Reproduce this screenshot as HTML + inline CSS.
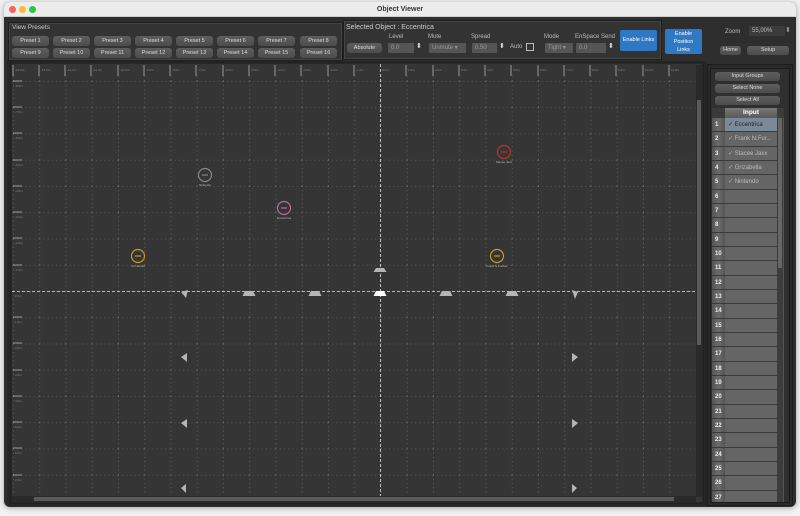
<!DOCTYPE html>
<html><head><meta charset="utf-8"><style>
*{box-sizing:border-box;margin:0;padding:0}
body{width:800px;height:516px;background:#f2f2f2;font-family:"Liberation Sans",sans-serif;position:relative;overflow:hidden}
.win{position:absolute;left:4px;top:2px;width:792px;height:505px;background:#2e2e2e;border-radius:6px;overflow:hidden;box-shadow:0 1px 6px rgba(0,0,0,.35)}
.tb{position:absolute;left:0;top:0;width:792px;height:15px;background:#ececec;border-bottom:1px solid #cfcfcf;text-align:center;font-size:7px;font-weight:bold;line-height:15px;color:#333}
.dot{position:absolute;top:4px;width:7px;height:7px;border-radius:50%}
.a{position:absolute}
.pnl{position:absolute;background:#333;border:1px solid #1e1e1e;box-shadow:inset 0 0 0 1px #444}
.btn{position:absolute;height:10px;background:linear-gradient(#5e5e5e,#4c4c4c);border-radius:3px;color:#ddd;font-size:5.5px;text-align:center;line-height:10px}
.lbl{position:absolute;font-size:6px;color:#bbb}
.fld{position:absolute;height:10px;background:#555;color:#999;font-size:6px;line-height:10px;padding-left:3px;border-radius:1px}
.blue{position:absolute;background:#2f78c4;color:#fff;font-size:5.5px;text-align:center;border-radius:2px}
.row{position:absolute;left:0;width:65px;height:14.33px;border-bottom:1px solid #3a3a3a}
.num{position:absolute;left:0;top:0;width:13px;height:100%;background:linear-gradient(90deg,#555,#6a6a6a,#555);color:#eee;font-size:6px;font-weight:bold;line-height:14px;padding-left:3px}
.nm{position:absolute;left:13px;top:0;width:52px;height:100%;background:#656565;color:#bbb;font-size:6px;line-height:14px;padding-left:3px}
</style></head><body>
<div class="win">
<div class="tb">Object Viewer</div>
<div class="dot" style="left:5px;background:#fe5f57"></div>
<div class="dot" style="left:15px;background:#febc2e"></div>
<div class="dot" style="left:25px;background:#28c840"></div>

<div class="pnl" style="left:4px;top:20px;width:335px;height:39px"></div>
<div class="lbl" style="left:8px;top:22px;color:#ccc;font-size:6.5px">View Presets</div>
<div class="btn" style="left:8px;top:34px;width:37px">Preset 1</div>
<div class="btn" style="left:49px;top:34px;width:37px">Preset 2</div>
<div class="btn" style="left:90px;top:34px;width:37px">Preset 3</div>
<div class="btn" style="left:131px;top:34px;width:37px">Preset 4</div>
<div class="btn" style="left:172px;top:34px;width:37px">Preset 5</div>
<div class="btn" style="left:213px;top:34px;width:37px">Preset 6</div>
<div class="btn" style="left:254px;top:34px;width:37px">Preset 7</div>
<div class="btn" style="left:296px;top:34px;width:37px">Preset 8</div>
<div class="btn" style="left:8px;top:46px;width:37px">Preset 9</div>
<div class="btn" style="left:49px;top:46px;width:37px">Preset 10</div>
<div class="btn" style="left:90px;top:46px;width:37px">Preset 11</div>
<div class="btn" style="left:131px;top:46px;width:37px">Preset 12</div>
<div class="btn" style="left:172px;top:46px;width:37px">Preset 13</div>
<div class="btn" style="left:213px;top:46px;width:37px">Preset 14</div>
<div class="btn" style="left:254px;top:46px;width:37px">Preset 15</div>
<div class="btn" style="left:296px;top:46px;width:37px">Preset 16</div>

<div class="pnl" style="left:339px;top:18px;width:319px;height:40px"></div>
<div class="lbl" style="left:342px;top:22px;font-size:7px;color:#ccc">Selected Object : Eccentrica</div>
<div class="btn" style="left:343px;top:41px;width:35px">Absolute</div>
<div class="lbl" style="left:385px;top:32px">Level</div>
<div class="fld" style="left:384px;top:41px;width:26px">0.0</div>
<div class="lbl" style="left:412px;top:40px;font-size:7px;color:#ddd">⬍</div>
<div class="lbl" style="left:424px;top:32px">Mute</div>
<div class="fld" style="left:425px;top:41px;width:37px">Unmute ▾</div>
<div class="lbl" style="left:467px;top:32px">Spread</div>
<div class="fld" style="left:468px;top:41px;width:25px">0.50</div>
<div class="lbl" style="left:495px;top:40px;font-size:7px;color:#ddd">⬍</div>
<div class="lbl" style="left:506px;top:42px">Auto</div>
<div class="a" style="left:522px;top:41px;width:8px;height:8px;border:1px solid #bbb"></div>
<div class="lbl" style="left:540px;top:32px">Mode</div>
<div class="fld" style="left:541px;top:41px;width:28px">Tight ▾</div>
<div class="lbl" style="left:571px;top:32px">EnSpace Send</div>
<div class="fld" style="left:572px;top:41px;width:30px">0.0</div>
<div class="lbl" style="left:604px;top:40px;font-size:7px;color:#ddd">⬍</div>
<div class="blue" style="left:616px;top:28px;width:37px;height:21px;line-height:21px">Enable Links</div>
<div class="blue" style="left:661px;top:27px;width:37px;height:25px;line-height:8px;padding-top:1px">Enable<br>Position<br>Links</div>
<div class="lbl" style="left:721px;top:27px">Zoom</div>
<div class="fld" style="left:745px;top:24px;width:36px;color:#bbb;background:#3c3c3c">55,00%</div>
<div class="lbl" style="left:781px;top:24px;font-size:7px;color:#999">⬍</div>
<div class="btn" style="left:716px;top:44px;width:21px;height:9px;line-height:9px">Home</div>
<div class="btn" style="left:743px;top:44px;width:42px;height:9px;line-height:9px">Setup</div>

<div class="a" style="left:3px;top:59px;width:700px;height:445px;background:#262626"></div>
<svg class="a" style="left:0;top:0" width="792" height="505">
<defs>
<pattern id="g" x="376.5" y="289" width="26.25" height="26.25" patternUnits="userSpaceOnUse">
<line x1="0.5" y1="0" x2="0.5" y2="26.25" stroke="#777" stroke-width="0.6" stroke-dasharray="1,3.2"/>
<line x1="0" y1="0.5" x2="26.25" y2="0.5" stroke="#777" stroke-width="0.6" stroke-dasharray="1,3.2"/>
</pattern>
</defs>
<rect x="7" y="61" width="692" height="440" fill="#353535" stroke="#1c1c1c"/>
<rect x="8" y="72" width="683" height="420" fill="url(#g)"/>
<rect x="8" y="62" width="683" height="12" fill="#353535"/>
<line x1="376.5" y1="62" x2="376.5" y2="494" stroke="#ddd" stroke-width="0.8" stroke-dasharray="3,2"/>
<line x1="8" y1="289.5" x2="691" y2="289.5" stroke="#ddd" stroke-width="0.8" stroke-dasharray="3,2"/>
<g stroke="#999" stroke-width="1">
<path d="M9 63v11M35 63v11M61 63v11M87 63v11M114 63v11M140 63v11M166 63v11M192 63v11M219 63v11M245 63v11M271 63v11M297 63v11M324 63v11M350 63v11M402 63v11M429 63v11M455 63v11M481 63v11M507 63v11M534 63v11M560 63v11M586 63v11M612 63v11M639 63v11M665 63v11"/>
<path d="M9 79h9M9 105h9M9 131h9M9 158h9M9 184h9M9 210h9M9 236h9M9 263h9M9 315h9M9 341h9M9 368h9M9 394h9M9 420h9M9 446h9M9 473h9"/>
</g>
<g fill="#888" font-size="3" font-family="Liberation Sans">
<text x="11" y="69">-14.0m</text><text x="37" y="69">-13.0m</text><text x="63" y="69">-12.0m</text><text x="89" y="69">-11.0m</text><text x="116" y="69">-10.0m</text><text x="142" y="69">-9.0m</text><text x="168" y="69">-8.0m</text><text x="194" y="69">-7.0m</text><text x="221" y="69">-6.0m</text><text x="247" y="69">-5.0m</text><text x="273" y="69">-4.0m</text><text x="299" y="69">-3.0m</text><text x="326" y="69">-2.0m</text><text x="352" y="69">-1.0m</text><text x="378" y="69">0.0m</text><text x="404" y="69">1.0m</text><text x="431" y="69">2.0m</text><text x="457" y="69">3.0m</text><text x="483" y="69">4.0m</text><text x="509" y="69">5.0m</text><text x="536" y="69">6.0m</text><text x="562" y="69">7.0m</text><text x="588" y="69">8.0m</text><text x="614" y="69">9.0m</text><text x="641" y="69">10.0m</text><text x="667" y="69">11.0m</text>
<text x="11" y="85">-8.0m</text><text x="11" y="111">-7.0m</text><text x="11" y="137">-6.0m</text><text x="11" y="164">-5.0m</text><text x="11" y="190">-4.0m</text><text x="11" y="216">-3.0m</text><text x="11" y="242">-2.0m</text><text x="11" y="269">-1.0m</text><text x="11" y="295">0.0m</text><text x="11" y="321">1.0m</text><text x="11" y="347">2.0m</text><text x="11" y="374">3.0m</text><text x="11" y="400">4.0m</text><text x="11" y="426">5.0m</text><text x="11" y="452">6.0m</text><text x="11" y="479">7.0m</text>
</g>
<rect x="692" y="63" width="6" height="432" fill="#2a2a2a"/>
<rect x="693" y="98" width="4" height="245" fill="#5a5a5a"/>
<rect x="8" y="494" width="684" height="6" fill="#2a2a2a"/>
<rect x="30" y="495" width="640" height="4" fill="#5a5a5a"/>
<g fill="#b5b5b5">
<path d="M372 266h8l2.5 4h-13z"/>
<path d="M372 289h8l2.5 5h-13z" fill="#fff"/>
<path d="M241 289h8l2.5 5h-13z"/><path d="M307 289h8l2.5 5h-13z"/><path d="M438 289h8l2.5 5h-13z"/><path d="M504 289h8l2.5 5h-13z"/>
<path d="M177 290l7 -2l-2 8z"/><path d="M568 288l6 2l-3 7z"/>
<path d="M177 355l6 -4v9z"/><path d="M568 351l6 4l-6 5z"/>
<path d="M177 421l6 -4v9z"/><path d="M568 417l6 4l-6 5z"/>
<path d="M177 486l5 -4v9z"/><path d="M568 482l5 4l-5 5z"/>
</g>
<g fill="none" stroke-width="1.2">
<circle cx="201" cy="173" r="6.5" stroke="#888"/><path d="M198 173h6" stroke="#888"/>
<circle cx="280" cy="206" r="6.5" stroke="#c06a9a"/><path d="M277 206h6" stroke="#c06a9a"/>
<circle cx="134" cy="254" r="6.5" stroke="#c99a1a"/><path d="M131 254h6" stroke="#c99a1a"/>
<circle cx="493" cy="254" r="6.5" stroke="#c99a1a"/><path d="M490 254h6" stroke="#c99a1a"/>
<circle cx="500" cy="150" r="6.5" stroke="#c0302a"/><path d="M497 150h6" stroke="#c0302a"/>
</g>
<g fill="#bbb" font-size="3" font-family="Liberation Sans" text-anchor="middle">
<text x="201" y="184">Nintendo</text><text x="280" y="217">Eccentrica</text><text x="134" y="265">Grizabella</text><text x="493" y="265">Frank N.Further</text><text x="500" y="161">Stacee Jaxx</text>
</g>
</svg>

<div class="a" style="left:703px;top:62px;width:86px;height:442px;background:#2a2a2a;border:1px solid #1c1c1c"></div>
<div class="a" style="left:706px;top:66px;width:80px;height:435px;border:1px solid #1a1a1a;background:#2f2f2f"></div>
<div class="btn" style="left:711px;top:70px;width:65px;height:9px;line-height:9px">Input Groups</div>
<div class="btn" style="left:711px;top:82px;width:65px;height:9px;line-height:9px">Select None</div>
<div class="btn" style="left:711px;top:94px;width:65px;height:9px;line-height:9px">Select All</div>
<div class="a" style="left:708px;top:106px;width:72px;height:394px;overflow:hidden;background:#555">
<div class="a" style="left:0;top:0;width:72px;height:10px;background:#3a3a3a"></div>
<div class="a" style="left:13px;top:0;width:52px;height:10px;background:linear-gradient(#777,#5a5a5a);color:#fff;font-size:6.5px;font-weight:bold;text-align:center;line-height:10px">Input</div>
<div class="a" style="left:65px;top:0;width:6px;height:394px;background:#3c3c3c"></div>
<div class="a" style="left:66px;top:10px;width:4px;height:150px;background:#666"></div>
<div style="position:absolute;left:0;top:10px;width:65px">
<div class="row" style="top:0"><div class="num">1</div><div class="nm" style="background:#7a8a98;color:#223">✓ Eccentrica</div></div>
<div class="row" style="top:14.33px"><div class="num">2</div><div class="nm">✓ Frank N.Fur...</div></div>
<div class="row" style="top:28.66px"><div class="num">3</div><div class="nm">✓ Stacee Jaxx</div></div>
<div class="row" style="top:43px"><div class="num">4</div><div class="nm">✓ Grizabella</div></div>
<div class="row" style="top:57.3px"><div class="num">5</div><div class="nm">✓ Nintendo</div></div>
<div class="row" style="top:71.6px"><div class="num">6</div><div class="nm"></div></div>
<div class="row" style="top:86px"><div class="num">7</div><div class="nm"></div></div>
<div class="row" style="top:100.3px"><div class="num">8</div><div class="nm"></div></div>
<div class="row" style="top:114.6px"><div class="num">9</div><div class="nm"></div></div>
<div class="row" style="top:129px"><div class="num">10</div><div class="nm"></div></div>
<div class="row" style="top:143.3px"><div class="num">11</div><div class="nm"></div></div>
<div class="row" style="top:157.6px"><div class="num">12</div><div class="nm"></div></div>
<div class="row" style="top:172px"><div class="num">13</div><div class="nm"></div></div>
<div class="row" style="top:186.3px"><div class="num">14</div><div class="nm"></div></div>
<div class="row" style="top:200.6px"><div class="num">15</div><div class="nm"></div></div>
<div class="row" style="top:215px"><div class="num">16</div><div class="nm"></div></div>
<div class="row" style="top:229.3px"><div class="num">17</div><div class="nm"></div></div>
<div class="row" style="top:243.6px"><div class="num">18</div><div class="nm"></div></div>
<div class="row" style="top:258px"><div class="num">19</div><div class="nm"></div></div>
<div class="row" style="top:272.3px"><div class="num">20</div><div class="nm"></div></div>
<div class="row" style="top:286.6px"><div class="num">21</div><div class="nm"></div></div>
<div class="row" style="top:301px"><div class="num">22</div><div class="nm"></div></div>
<div class="row" style="top:315.3px"><div class="num">23</div><div class="nm"></div></div>
<div class="row" style="top:329.6px"><div class="num">24</div><div class="nm"></div></div>
<div class="row" style="top:344px"><div class="num">25</div><div class="nm"></div></div>
<div class="row" style="top:358.3px"><div class="num">26</div><div class="nm"></div></div>
<div class="row" style="top:372.6px"><div class="num">27</div><div class="nm"></div></div>
</div>
</div>
</div>
</body></html>
